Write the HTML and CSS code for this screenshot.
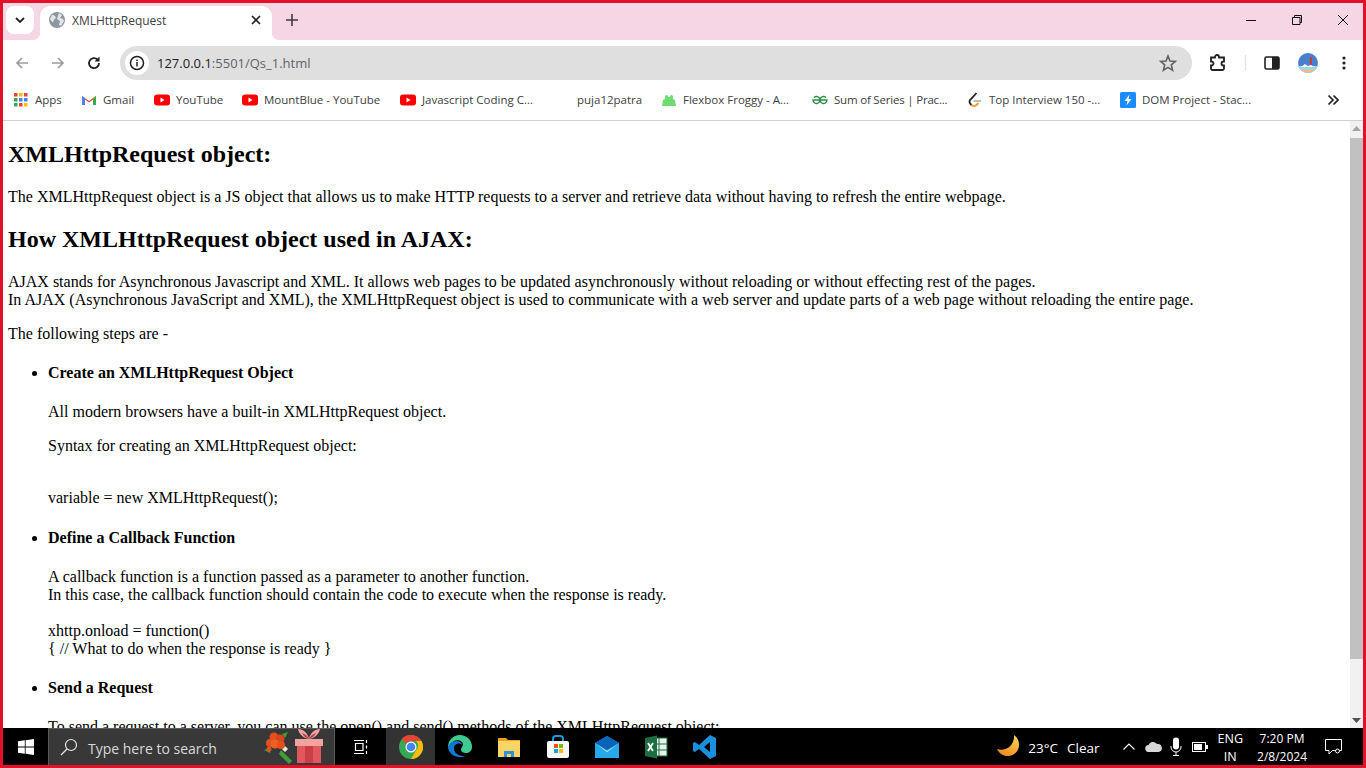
FILE: index.html
```html
<!DOCTYPE html>
<html>
<head>
    <title>XMLHttpRequest</title>
    <meta charset="UTF-8">
    <link rel="stylesheet" href="styles.css">
</head>
<body>
<div class="screen">
    <div class="tabstrip">
        <div class="tabsearch"><svg width="12" height="12" viewBox="0 0 12 12"><path d="M2 4l4 4 4-4" fill="none" stroke="#202124" stroke-width="1.8"/></svg></div>
        <div class="tab">
            <svg class="globe" width="16" height="16" viewBox="0 0 16 16"><circle cx="8" cy="8" r="8" fill="#8f979f"/><path d="M3 2.5l3 1.5 1 2-2 1.5-1 3-3-3zM10 1l3 2-2 3 3 1 1 2-3 5-2-1 1-4-3-2 1-3z" fill="#fff" opacity=".75"/></svg>
            <span class="tabtitle">XMLHttpRequest</span>
            <svg class="tabclose" width="10" height="10" viewBox="0 0 10 10"><path d="M1 1l8 8M9 1l-8 8" stroke="#202124" stroke-width="1.6"/></svg>
        </div>
        <svg class="newtab" width="12" height="12" viewBox="0 0 12 12"><path d="M6 0v12M0 6h12" stroke="#3c3c3c" stroke-width="1.6"/></svg>
        <div class="wincontrols">
            <svg width="12" height="12" viewBox="0 0 12 12"><path d="M1 6.500h10" stroke="#111" stroke-width="1"/></svg>
            <svg width="12" height="12" viewBox="0 0 12 12"><path d="M3.500 3V1.500h7v7H9M1.500 3.500h7.500v7H1.500z" fill="none" stroke="#111" stroke-width="1"/></svg>
            <svg width="12" height="12" viewBox="0 0 12 12"><path d="M1 1l10 10M11 1L1 11" stroke="#111" stroke-width="1"/></svg>
        </div>
    </div>

    <div class="toolbar">
        <svg class="navbtn" width="16" height="16" viewBox="0 0 16 16"><path d="M14 8H3M8 3L3 8l5 5" fill="none" stroke="#9a9c9f" stroke-width="1.7"/></svg>
        <svg class="navbtn" width="16" height="16" viewBox="0 0 16 16"><path d="M2 8h11M8 3l5 5-5 5" fill="none" stroke="#9a9c9f" stroke-width="1.7"/></svg>
        <svg class="navbtn" width="16" height="16" viewBox="0 0 16 16"><path d="M13 8a5 5 0 1 1-1.500-3.500" fill="none" stroke="#202124" stroke-width="1.800"/><path d="M13.500 1.500v5h-5z" fill="#202124"/></svg>
        <div class="omnibox">
            <span class="infobtn"><svg width="16" height="16" viewBox="0 0 16 16"><circle cx="8" cy="8" r="6.500" fill="none" stroke="#202124" stroke-width="1.500"/><path d="M8 7v4.500M8 4.500v1.500" stroke="#202124" stroke-width="1.500"/></svg></span>
            <span class="url"><span class="host">127.0.0.1</span>:5501/Qs_1.html</span>
            <svg class="star" width="18" height="18" viewBox="0 0 18 18"><path d="M9 2l2 5 5.300.4-4 3.500 1.300 5.300L9 13.400 4.400 16.200l1.300-5.300-4-3.500L7 7z" fill="none" stroke="#5f6368" stroke-width="1.600"/></svg>
        </div>
        <svg class="puzzle" width="18" height="18" viewBox="0 0 18 18"><path d="M6 3.500V3a2 2 0 0 1 4 0v.500h5v4h-.500a2 2 0 0 0 0 4h.500v3a1.500 1.500 0 0 1-1.500 1.500H3.500A1.500 1.500 0 0 1 2 14.500v-3h.500a2 2 0 0 0 0-4H2v-4z" fill="none" stroke="#202124" stroke-width="1.800"/></svg>
        <span class="tooldivider"></span>
        <svg class="sidepanel" width="16" height="16" viewBox="0 0 16 16"><rect x="1" y="2" width="14" height="12" rx="1.500" fill="#fff" stroke="#202124" stroke-width="1.600"/><rect x="8" y="2" width="7" height="12" fill="#202124"/></svg>
        <svg class="avatar" width="20" height="20" viewBox="0 0 20 20"><circle cx="10" cy="10" r="10" fill="#4a7fcb"/><path d="M0.500 13h19a10 10 0 0 1-19 0z" fill="#9fd6df"/><path d="M3 14l4-3 3 2 3-1 4 2z" fill="#fff"/><path d="M3 17h14a10 10 0 0 1-14 0z" fill="#f2b98a"/><rect x="12" y="4" width="2" height="8" fill="#c8402f"/></svg>
        <svg class="kebab" width="4" height="16" viewBox="0 0 4 16"><circle cx="2" cy="3" r="1.600" fill="#202124"/><circle cx="2" cy="8" r="1.600" fill="#202124"/><circle cx="2" cy="13" r="1.600" fill="#202124"/></svg>
    </div>

    <div class="bookmarks">
        <span class="bm bm-apps"><svg width="16" height="16" viewBox="0 0 16 16"><rect x="1" y="1" width="3.500" height="3.500" fill="#ea4335"/><rect x="6" y="1" width="3.500" height="3.500" fill="#fbbc04"/><rect x="11" y="1" width="3.500" height="3.500" fill="#ea4335"/><rect x="1" y="6" width="3.500" height="3.500" fill="#34a853"/><rect x="6" y="6" width="3.500" height="3.500" fill="#4285f4"/><rect x="11" y="6" width="3.500" height="3.500" fill="#4285f4"/><rect x="1" y="11" width="3.500" height="3.500" fill="#34a853"/><rect x="6" y="11" width="3.500" height="3.500" fill="#ea4335"/><rect x="11" y="11" width="3.500" height="3.500" fill="#fbbc04"/></svg>Apps</span>
        <span class="bm bm-gmail"><svg width="16" height="16" viewBox="0 0 16 16"><path d="M1 13V4l7 5 7-5v9h-3V7.500L8 10.500 4 7.500V13z" fill="#ea4335"/><path d="M1 4v9h3V6z" fill="#4285f4"/><path d="M15 4v9h-3V6z" fill="#34a853"/><path d="M12 6l3-2.500V4l-3 3z" fill="#fbbc04"/></svg>Gmail</span>
        <span class="bm bm-yt"><svg width="16" height="16" viewBox="0 0 16 16"><rect y="2.500" width="16" height="11" rx="3" fill="#f00"/><path d="M6.500 5.500v5l4-2.500z" fill="#fff"/></svg>YouTube</span>
        <span class="bm bm-mount"><svg width="16" height="16" viewBox="0 0 16 16"><rect y="2.500" width="16" height="11" rx="3" fill="#f00"/><path d="M6.500 5.500v5l4-2.500z" fill="#fff"/></svg>MountBlue - YouTube</span>
        <span class="bm bm-js"><svg width="16" height="16" viewBox="0 0 16 16"><rect y="2.500" width="16" height="11" rx="3" fill="#f00"/><path d="M6.500 5.500v5l4-2.500z" fill="#fff"/></svg>Javascript Coding C...</span>
        <span class="bm bm-puja">puja12patra</span>
        <span class="bm bm-frog"><svg width="16" height="16" viewBox="0 0 16 16"><path d="M1 14l1-6 2-1V4.500a1.500 1.500 0 0 1 3 0V5h2v-.500a1.500 1.500 0 0 1 3 0V7l2 1 1 6z" fill="#6fdc72"/></svg>Flexbox Froggy - A...</span>
        <span class="bm bm-gfg"><svg width="16" height="16" viewBox="0 0 16 16"><path d="M8 8h7a3.500 3.500 0 1 1-1-2.500M8 8H1a3.500 3.500 0 1 0 1-2.500" fill="none" stroke="#2f8d46" stroke-width="1.400"/></svg><span class="tight">Sum of Series | Prac...</span></span>
        <span class="bm bm-top"><svg width="16" height="16" viewBox="0 0 16 16"><path d="M9.500 1L3.500 7.500a3 3 0 0 0 0 4.500l1 1" fill="none" stroke="#222" stroke-width="1.800"/><path d="M4.500 13a3.500 3.500 0 0 0 5 0l2-2" fill="none" stroke="#f0a030" stroke-width="1.800"/><path d="M6.500 9h7.500" stroke="#aaa" stroke-width="1.500"/></svg>Top Interview 150 -...</span>
        <span class="bm bm-dom"><svg width="16" height="16" viewBox="0 0 16 16"><rect width="16" height="16" rx="1.500" fill="#1a8cff"/><path d="M9.500 2.500L4.500 9h3l-1 4.500 5-6.500h-3z" fill="#fff"/></svg>DOM Project - Stac...</span>
        <svg class="bm-more" width="12" height="12" viewBox="0 0 12 12"><path d="M1.500 1.500L6 6l-4.500 4.500M6.500 1.500L11 6l-4.500 4.500" fill="none" stroke="#202124" stroke-width="1.700"/></svg>
    </div>

    <div class="viewport">
        <div class="pagecontent">
            <h2>XMLHttpRequest object:</h2>
            <p>The XMLHttpRequest object is a JS object that allows us to make HTTP requests to a server and retrieve data without having to refresh the entire webpage.</p>
            <h2>How XMLHttpRequest object used in AJAX:</h2>
            <p>AJAX stands for Asynchronous Javascript and XML. It allows web pages to be updated asynchronously without reloading or without effecting rest of the pages.<br>
            In AJAX (Asynchronous JavaScript and XML), the XMLHttpRequest object is used to communicate with a web server and update parts of a web page without reloading the entire page.</p>
            <p>The following steps are -</p>
            <ul>
                <li>
                    <h4>Create an XMLHttpRequest Object</h4>
                    <p>All modern browsers have a built-in XMLHttpRequest object.</p>
                    <p>Syntax for creating an XMLHttpRequest object:</p>
                    <p><br>variable = new XMLHttpRequest();</p>
                </li>
                <li>
                    <h4>Define a Callback Function</h4>
                    <p>A callback function is a function passed as a parameter to another function.<br>
                    In this case, the callback function should contain the code to execute when the response is ready.<br><br>
                    xhttp.onload = function()<br>
                    { // What to do when the response is ready }</p>
                </li>
                <li>
                    <h4>Send a Request</h4>
                    <p>To send a request to a server, you can use the open() and send() methods of the XMLHttpRequest object:</p>
                </li>
            </ul>
        </div>
        <div class="scrollbar">
            <svg width="9" height="5" viewBox="0 0 9 5"><path d="M4.500 0L9 5H0z" fill="#a3a3a3"/></svg>
            <div class="scrollthumb"></div>
            <svg width="9" height="5" viewBox="0 0 9 5"><path d="M0 0h9L4.500 5z" fill="#505050"/></svg>
        </div>
    </div>

    <div class="taskbar">
        <div class="startbtn"><svg width="16" height="16" viewBox="0 0 16 16"><path d="M0 2.300l6.800-1v6.300H0zM7.600 1.200L16 0v7.600H7.600zM0 8.400h6.800v6.300l-6.800-1zM7.600 8.400H16V16l-8.400-1.200z" fill="#fff"/></svg></div>
        <div class="searchbox">
            <svg width="18" height="18" viewBox="0 0 18 18"><circle cx="11" cy="7" r="5.500" fill="none" stroke="#e6e6e6" stroke-width="1.200"/><path d="M7 11l-6 6" stroke="#e6e6e6" stroke-width="1.200"/></svg>
            <span class="searchtext">Type here to search</span>
            <svg class="gift" width="62" height="36" viewBox="0 0 62 36">
                <path d="M19 21l11 11-3 3-10-10z" fill="#3f9e3a"/>
                <path d="M20 20l3-3 3 3-3 3z" fill="#f3ead0"/>
                <path d="M2 21l7-2-1 5zM20 5l6-2-3 6z" fill="#3f9e3a"/>
                <circle cx="8" cy="14" r="4" fill="#e2501f"/>
                <circle cx="12" cy="8" r="4.500" fill="#e2501f"/>
                <circle cx="18" cy="10" r="4.500" fill="#d8451a"/>
                <circle cx="13" cy="15" r="4.500" fill="#ee5f22"/>
                <circle cx="19" cy="16" r="4" fill="#e2501f"/>
                <circle cx="7" cy="20" r="2.500" fill="#e2501f"/>
                <rect x="35" y="14" width="24" height="20" fill="#e0575f"/>
                <rect x="43" y="14" width="8" height="20" fill="#c93f48"/>
                <rect x="33" y="10" width="28" height="7" fill="#f2a3a0"/>
                <path d="M47 10c-6-1-10-5-11-10 5 0 10 4 11 10zM47 10c6-1 10-5 11-10-5 0-10 4-11 10z" fill="#f2a3a0"/>
                <path d="M47 10c-3-1-6-3-7-6 3 1 6 3 7 6zM47 10c3-1 6-3 7-6-3 1-6 3-7 6z" fill="#a8474c"/>
            </svg>
        </div>
        <div class="taskicon taskview"><svg width="16" height="16" viewBox="0 0 16 16"><path d="M1 1.500h10M1 14.500h10M2.500 4.500h7.500v7H2.500zM13.500 1v3M13.500 12v3M13.500 6.500v3" fill="none" stroke="#fff" stroke-width="1.200"/></svg></div>
        <div class="taskicon active"><svg width="24" height="24" viewBox="0 0 24 24"><circle cx="12" cy="12" r="12" fill="#34a853"/><path d="M12 0a12 12 0 0 1 10.400 6H12a6 6 0 0 0-5.200 3L3 3.500A12 12 0 0 1 12 0z" fill="#ea4335"/><path d="M22.400 6A12 12 0 0 1 12 24l5.200-9a6 6 0 0 0-.2-9z" fill="#fbbc04"/><circle cx="12" cy="12" r="5.500" fill="#fff"/><circle cx="12" cy="12" r="4.300" fill="#4285f4"/></svg></div>
        <div class="taskicon"><svg width="24" height="24" viewBox="0 0 24 24"><path d="M12 0a12 12 0 0 1 12 12c0 4-3 6-6 6-2.500 0-5-1-5-3.500 0-2 2-3 2-5C15 6 10 4 6 6c-3 1.500-5.500 5-6 7A12 12 0 0 1 12 0z" fill="#3ecb8f"/><path d="M0 13c.5-4 4-7 8-7 3 0 6 1.500 6 3.500-3-2-8-1-8 4 0 5 6 8 11 7.500A12 12 0 0 1 0 13z" fill="#0f78d4"/></svg></div>
        <div class="taskicon"><svg width="24" height="22" viewBox="0 0 24 22"><path d="M1 2h8l2 2h12v17H1z" fill="#e8a21c"/><rect x="1" y="5" width="22" height="16" fill="#fad465"/><path d="M7 21v-6h10v6h-3v-3h-4v3z" fill="#2f8fd8"/></svg></div>
        <div class="taskicon"><svg width="24" height="24" viewBox="0 0 24 24"><path d="M7 6V4a3 3 0 0 1 3-3h4a3 3 0 0 1 3 3v2" fill="none" stroke="#1a9ad9" stroke-width="2"/><rect x="1" y="6" width="22" height="17" rx="2" fill="#f7f7f7"/><rect x="8" y="9" width="4" height="4" fill="#f25022"/><rect x="13" y="9" width="4" height="4" fill="#7fba00"/><rect x="8" y="14" width="4" height="4" fill="#00a4ef"/><rect x="13" y="14" width="4" height="4" fill="#ffb900"/></svg></div>
        <div class="taskicon"><svg width="24" height="22" viewBox="0 0 24 22"><path d="M0 7L12 0l12 7v15H0z" fill="#28a8ea"/><path d="M0 7L12 0l12 7-12 7z" fill="#0364b8"/><path d="M0 7l12 8 12-8-12 9z" fill="#fff" opacity=".85"/></svg></div>
        <div class="taskicon"><svg width="24" height="24" viewBox="0 0 24 24"><rect x="9" y="3" width="14" height="18" fill="#e8f3ec" stroke="#1d6f42"/><path d="M15 3v18M9 9h14M9 15h14" stroke="#1d6f42"/><path d="M1 3l12-2.500v23L1 21z" fill="#1d6f42"/><path d="M4 8l5 8M9 8l-5 8" stroke="#fff" stroke-width="1.800"/></svg></div>
        <div class="taskicon"><svg width="24" height="24" viewBox="0 0 24 24"><path d="M17 0l6 3v18l-6 3L6 14l-4 3-2-1V8l2-1 4 3zM17 7l-6 5 6 5z" fill="#1a8fdc" fill-rule="evenodd"/></svg></div>

        <div class="tray">
            <svg class="moon" width="23" height="23" viewBox="0 0 23 23"><defs><linearGradient id="moonfill" x1="0.800" y1="0" x2="0.300" y2="1"><stop offset="0" stop-color="#fbd25a"/><stop offset="1" stop-color="#ee8a1e"/></linearGradient></defs><path d="M17 0a11.500 11.500 0 1 1-17 14c8 3 18-3 17-14z" fill="url(#moonfill)"/></svg>
            <span class="weather">23°C</span>
            <span class="weather clear">Clear</span>
            <svg class="trayicon caret" width="12" height="7" viewBox="0 0 12 7"><path d="M0.500 6.500L6 1l5.500 5.500" fill="none" stroke="#fff" stroke-width="1.100"/></svg>
            <svg class="trayicon cloud" width="17" height="11" viewBox="0 0 17 11"><path d="M4 11a3.500 3.500 0 0 1-.5-7A5 5 0 0 1 12 3a4 4 0 0 1 1.500 8z" fill="#d8d8d8"/></svg>
            <svg class="trayicon mic" width="12" height="19" viewBox="0 0 12 19"><rect x="3" y="0.500" width="6" height="12" rx="3" fill="#fff"/><path d="M1 9v1a5 5 0 0 0 10 0V9M6 15v3M3 18.500h6" fill="none" stroke="#fff"/></svg>
            <svg class="trayicon battery" width="16" height="10" viewBox="0 0 16 10"><rect x="0.500" y="0.500" width="13" height="9" fill="none" stroke="#fff"/><rect x="2" y="2" width="8" height="6" fill="#fff"/><rect x="14" y="3" width="2" height="4" fill="#fff"/></svg>
            <div class="lang"><span>ENG</span><span>IN</span></div>
            <div class="clock"><span>7:20 PM</span><span>2/8/2024</span></div>
            <svg class="notify" width="17" height="16" viewBox="0 0 17 16"><path d="M0.500 0.500h16v11h-7l-2 0-3.500 3.500v-3.500H.5z" fill="none" stroke="#fff"/><circle cx="12.500" cy="12" r="2" fill="#000" stroke="#fff"/></svg>
        </div>
    </div>
</div>
</body>
</html>
```

FILE: styles.css
```css
html, body {
    margin: 0;
    padding: 0;
}

body {
    font-family: "Liberation Serif", "Times New Roman", serif;
    overflow: hidden;
}

.screen {
    width: 1366px;
    height: 768px;
    box-sizing: border-box;
    border: 3px solid #e2112a;
    display: flex;
    flex-direction: column;
    background: #fff;
    overflow: hidden;
}

/* tab strip */
.tabstrip {
    height: 37px;
    flex: none;
    background: #f6d5e5;
    display: flex;
    align-items: flex-end;
    font-family: "Open Sans", "Liberation Sans", sans-serif;
    font-size: 12px;
    color: #3c4043;
}

.tabsearch {
    width: 28px;
    height: 28px;
    margin: 0 6px 6px 3px;
    background: #fff;
    border-radius: 8px;
    display: flex;
    align-items: center;
    justify-content: center;
}

.tab {
    width: 232px;
    height: 34px;
    background: #fff;
    border-radius: 10px 10px 0 0;
    display: flex;
    align-items: center;
    box-sizing: border-box;
    padding: 0 11px 6px 9px;
    position: relative;
}

/* flared corners where the tab meets the toolbar */
.tab::before, .tab::after {
    content: "";
    position: absolute;
    bottom: 0;
    width: 8px;
    height: 8px;
}

.tab::before {
    left: -8px;
    background: radial-gradient(circle at 0 0, transparent 8px, #fff 8.500px);
}

.tab::after {
    right: -8px;
    background: radial-gradient(circle at 100% 0, transparent 8px, #fff 8.500px);
}

.tabtitle {
    margin-left: 7px;
    flex: 1;
}

.newtab {
    margin: 0 0 14px 14px;
}

.wincontrols {
    margin-left: auto;
    display: flex;
    gap: 34px;
    padding: 0 14px 14px 0;
}

/* toolbar */
.toolbar {
    height: 45px;
    flex: none;
    display: flex;
    align-items: center;
}

.navbtn {
    margin-left: 11px;
    margin-right: 9px;
}

.omnibox {
    width: 1072px;
    height: 34px;
    margin-left: 9px;
    background: #dfdfdf;
    border-radius: 17px;
    display: flex;
    align-items: center;
    font-family: "Open Sans", "Liberation Sans", sans-serif;
    font-size: 13px;
    color: #5f6368;
}

.infobtn {
    width: 24px;
    height: 24px;
    margin-left: 5px;
    background: #fff;
    border-radius: 50%;
    display: flex;
    align-items: center;
    justify-content: center;
}

.url {
    margin-left: 8px;
    flex: 1;
}

.host {
    color: #202124;
}

.star {
    margin-right: 15px;
}

.puzzle {
    margin-left: 17px;
}

.tooldivider {
    width: 1px;
    height: 16px;
    background: #f6d5e5;
    margin: 0 18px 0 18px;
}

.avatar {
    margin-left: 18px;
}

.kebab {
    margin-left: 24px;
}

/* bookmarks */
.bookmarks {
    height: 36px;
    flex: none;
    box-sizing: border-box;
    border-bottom: 1px solid #d0d0d0;
    display: flex;
    align-items: center;
    padding: 0 0 6px 10px;
    font-family: "Open Sans", "Liberation Sans", sans-serif;
    font-size: 11.500px;
    color: #3c4043;
}

.bm {
    display: flex;
    align-items: center;
    gap: 6px;
    white-space: nowrap;
}

.tight {
    letter-spacing: -0.200px;
}

.bm-apps { width: 68px; }
.bm-gmail { width: 73px; }
.bm-yt { width: 88px; }
.bm-mount { width: 158px; }
.bm-js { width: 177px; }
.bm-puja { width: 84px; }
.bm-frog { width: 151px; }
.bm-gfg { width: 155px; }
.bm-top { width: 153px; }
.bm-dom { width: 195px; }

.bm-more {
    margin-left: 12px;
}

/* page */
.viewport {
    flex: 1;
    min-height: 0;
    display: flex;
    overflow: hidden;
}

.pagecontent {
    flex: 1;
    min-width: 0;
    padding: 0 5px;
    font-size: 16px;
    color: #000;
    overflow: hidden;
}

.pagecontent h2:first-child {
    margin-top: 20px;
}

.scrollbar {
    width: 13px;
    flex: none;
    background: #f1f1f1;
    display: flex;
    flex-direction: column;
    align-items: center;
}

.scrollbar svg {
    margin: 5px 0;
    flex: none;
}

.scrollthumb {
    width: 100%;
    height: 521px;
    background: #c1c1c1;
    margin: 2px 0 auto 0;
}

/* taskbar */
.taskbar {
    height: 37px;
    flex: none;
    background: #000;
    display: flex;
    align-items: center;
    font-family: "Open Sans", "Liberation Sans", sans-serif;
    color: #fff;
}

.startbtn {
    width: 45px;
    display: flex;
    justify-content: center;
}

.searchbox {
    width: 287px;
    height: 37px;
    box-sizing: border-box;
    background: #383838;
    border: 1px solid #5a5a5a;
    border-bottom: none;
    display: flex;
    align-items: center;
    padding-left: 11px;
    font-size: 14px;
    color: #d8d8d8;
}

.searchtext {
    margin: 2px 0 0 10px;
    flex: 1;
}

.gift {
    margin-right: 10px;
    flex: none;
}

.taskicon {
    width: 49px;
    height: 37px;
    display: flex;
    align-items: center;
    justify-content: center;
}

.taskview {
    width: 51px;
}

.active {
    background: #333;
}

.tray {
    margin-left: auto;
    display: flex;
    align-items: center;
    font-size: 12.500px;
    padding-right: 21px;
}

.weather {
    font-size: 13.500px;
    margin: 2px 0 0 8px;
}

.clear {
    margin-left: 9px;
}

.caret {
    margin-left: 23px;
}

.cloud {
    margin-left: 10px;
}

.mic {
    margin-left: 8px;
}

.battery {
    margin-left: 10px;
}

.lang, .clock {
    display: flex;
    flex-direction: column;
    align-items: center;
    line-height: 18px;
    padding-top: 2px;
}

.lang {
    margin-left: 10px;
}

.clock {
    margin-left: 14px;
    font-size: 12px;
}

.notify {
    margin-left: 18px;
}
```
